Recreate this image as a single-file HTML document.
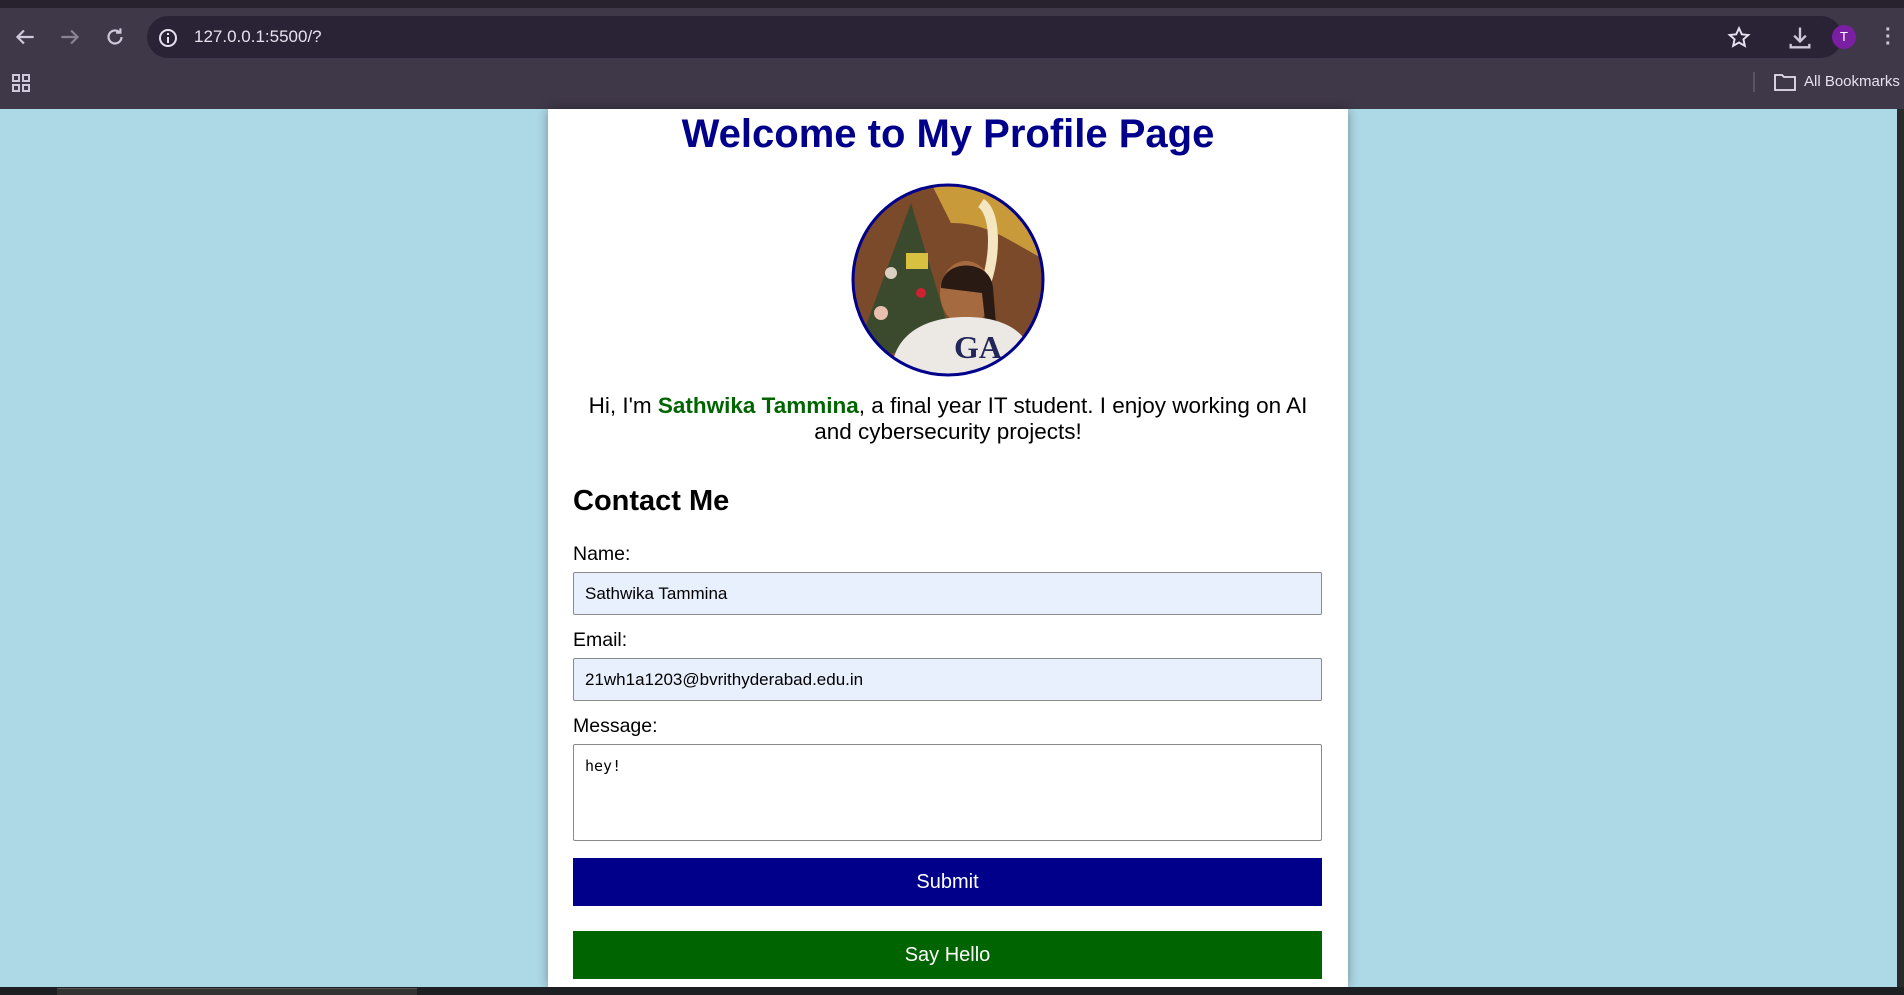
<!DOCTYPE html>
<html><head><meta charset="utf-8"><style>
*{box-sizing:border-box;margin:0;padding:0}
body{width:1904px;height:995px;overflow:hidden;background:#add8e6;font-family:"Liberation Sans",Arial,sans-serif;position:relative}
.tabs{position:absolute;top:0;left:0;width:1904px;height:8px;background:#28222f}
.tb{position:absolute;top:8px;left:0;width:1904px;height:101px;background:#3f3849}
.addr{position:absolute;top:16px;left:147px;width:1695px;height:42px;border-radius:21px;background:#2a2336}
.url{position:absolute;top:27px;left:194px;color:#e6e1ee;font-size:17px}
.ic{position:absolute;color:#cfc8da}
.page{position:absolute;left:548px;top:109px;width:800px;height:878px;background:#fff;box-shadow:0 0 10px rgba(0,0,0,.35)}
h1{position:absolute;left:0;width:800px;text-align:center;color:#00008b;font-size:40px;line-height:46px;top:2px}
.av{position:absolute;left:303px;top:74px}
p.intro{position:absolute;top:284px;left:30px;width:740px;text-align:center;font-size:22.5px;line-height:26px;color:#000}
p.intro b{color:#006400}
h2{position:absolute;top:376px;left:25px;font-size:29px}
label{position:absolute;left:25px;font-size:19.5px}
.in{position:absolute;left:25px;width:749px;border:1px solid #8a8a8a;border-radius:2px;background:#e8f0fe;font-size:17px;padding-left:11px;display:flex;align-items:center}
.ta{background:#fff;align-items:flex-start;padding-top:12px;font-family:"DejaVu Sans Mono",monospace;font-size:15px}
.btn{position:absolute;left:25px;width:749px;height:48px;color:#fff;font-size:20px;display:flex;align-items:center;justify-content:center}
.task{position:absolute;top:987px;left:0;width:1904px;height:8px;background:#1e1f22}
.sb{position:absolute;top:109px;right:0;width:7px;height:878px;background:#2a2a2a}
</style></head><body>
<div class="tabs"></div>
<div class="tb"></div>
<div class="addr"></div>
<svg class="ic" style="left:12px;top:24px" width="26" height="26" viewBox="0 0 24 24"><path d="M20 12H5M11 6l-6 6 6 6" stroke="#cfc8da" stroke-width="2" fill="none"/></svg>
<svg class="ic" style="left:57px;top:24px" width="26" height="26" viewBox="0 0 24 24"><path d="M4 12h15M13 6l6 6-6 6" stroke="#8a8394" stroke-width="2" fill="none"/></svg>
<svg class="ic" style="left:102px;top:24px" width="26" height="26" viewBox="0 0 24 24"><path d="M18 12a6 6 0 1 1-2-4.5M17 4v4h-4" stroke="#cfc8da" stroke-width="2" fill="none"/></svg>
<svg class="ic" style="left:156px;top:26px" width="24" height="24" viewBox="0 0 24 24"><circle cx="12" cy="12" r="8" stroke="#e6e1ee" stroke-width="2" fill="none"/><path d="M12 11v6M12 7v2" stroke="#e6e1ee" stroke-width="2"/></svg>
<div class="url">127.0.0.1:5500/?</div>
<svg class="ic" style="left:1726px;top:25px" width="26" height="26" viewBox="0 0 24 24"><path d="M12 3l2.6 5.6 6 .6-4.5 4 1.3 6L12 16.2 6.6 19.2l1.3-6-4.5-4 6-.6z" stroke="#e6e1ee" stroke-width="1.8" fill="none"/></svg>
<svg class="ic" style="left:1786px;top:24px" width="28" height="28" viewBox="0 0 24 24"><path d="M12 3v12M7 10l5 5 5-5M4 17v3h16v-3" stroke="#cfc8da" stroke-width="2" fill="none"/></svg>
<div style="position:absolute;left:1832px;top:25px;width:24px;height:24px;border-radius:50%;background:#7b1fa2;color:#fff;font-size:13px;text-align:center;line-height:24px">T</div>
<div style="position:absolute;left:1885px;top:27px;color:#cfc8da;font-size:20px;line-height:7px;font-weight:bold">·<br>·<br>·</div>
<svg class="ic" style="left:12px;top:74px" width="18" height="18" viewBox="0 0 18 18"><g stroke="#cfc8da" stroke-width="2" fill="none"><rect x="1" y="1" width="6" height="6"/><rect x="11" y="1" width="6" height="6"/><rect x="1" y="11" width="6" height="6"/><rect x="11" y="11" width="6" height="6"/></g></svg>
<div style="position:absolute;left:1753px;top:72px;width:2px;height:20px;background:#5a5364"></div>
<svg class="ic" style="left:1774px;top:73px" width="22" height="18" viewBox="0 0 22 18"><path d="M1 2h7l2 2h11v13H1z" stroke="#e6e1ee" stroke-width="1.8" fill="none"/></svg>
<div style="position:absolute;left:1804px;top:73px;color:#e6e1ee;font-size:15px">All Bookmarks</div>
<div class="page">
<h1>Welcome to My Profile Page</h1>
<svg class="av" width="194" height="194" viewBox="0 0 194 194">
<defs><clipPath id="c"><circle cx="97" cy="97" r="95"/></clipPath></defs>
<g clip-path="url(#c)">
<rect width="194" height="194" fill="#7a4a2a"/>
<path d="M80 0h120v80C160 60 140 40 100 40z" fill="#c99a3a"/>
<path d="M130 20c15 10 15 50 5 80" stroke="#f4e6c0" stroke-width="10" fill="none"/>
<path d="M60 20L5 170h100z" fill="#3b4a2c"/>
<circle cx="40" cy="90" r="6" fill="#d9d0c0"/><circle cx="70" cy="110" r="5" fill="#c23"/><circle cx="30" cy="130" r="7" fill="#e8c0b0"/><rect x="55" y="70" width="22" height="16" fill="#d8c040"/>
<ellipse cx="115" cy="110" rx="26" ry="32" fill="#a66a40"/>
<path d="M90 105c0-30 50-30 52 0l5 60-10 0-6-55z" fill="#2a1a14"/>
<path d="M40 194c0-40 30-60 75-60s70 20 70 60z" fill="#ece8e4"/>
<text x="103" y="175" font-family="Liberation Serif" font-weight="bold" font-size="32" fill="#23265a">GA</text>
</g>
<circle cx="97" cy="97" r="95" fill="none" stroke="#00008b" stroke-width="3"/>
</svg>
<p class="intro">Hi, I'm <b>Sathwika Tammina</b>, a final year IT student. I enjoy working on AI and cybersecurity projects!</p>
<h2>Contact Me</h2>
<label style="top:434px">Name:</label>
<div class="in" style="top:463px;height:43px">Sathwika Tammina</div>
<label style="top:520px">Email:</label>
<div class="in" style="top:549px;height:43px">21wh1a1203@bvrithyderabad.edu.in</div>
<label style="top:606px">Message:</label>
<div class="in ta" style="top:635px;height:97px">hey!</div>
<div class="btn" style="top:749px;background:#00008b">Submit</div>
<div class="btn" style="top:822px;background:#006400">Say Hello</div>
</div>
<div class="sb"></div>
<div class="task"></div>
<div style="position:absolute;left:57px;top:988px;width:360px;height:7px;background:#333;border-top:1px solid #555"></div>
</body></html>
